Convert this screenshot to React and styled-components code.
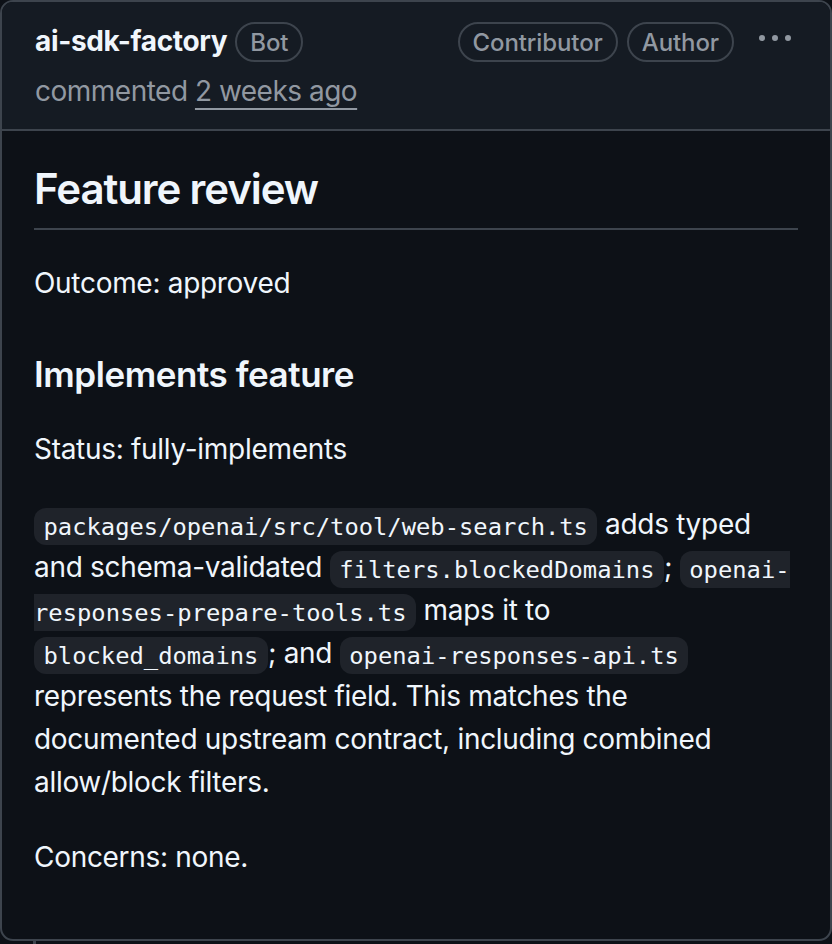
import React from "react";
import styled, { createGlobalStyle } from "styled-components";

const GlobalStyle = createGlobalStyle`
  html, body {
    margin: 0;
    padding: 0;
    background: #0d1117;
  }
  body {
    font-family: Inter, "Noto Sans", "Liberation Sans", sans-serif;
    color: #f0f6fc;
    -webkit-font-smoothing: antialiased;
  }
`;

const Page = styled.div`
  width: 832px;
`;

const Card = styled.div`
  box-sizing: border-box;
  width: 832px;
  height: 941px;
  border: 2px solid #3d444d;
  border-radius: 13px;
  overflow: hidden;
  background: #0d1117;
  display: flex;
  flex-direction: column;
`;

const Header = styled.header`
  background: #151b23;
  border-bottom: 2px solid #3d444d;
  padding: 20px 32px 17px 33px;
  display: flex;
  flex-direction: column;
  gap: 8px;
`;

const TopRow = styled.div`
  display: flex;
  align-items: center;
  height: 40px;
`;

const Author = styled.a`
  font-size: 28px;
  font-weight: 700;
  line-height: 40px;
  letter-spacing: -0.35px;
  color: #f0f6fc;
  text-decoration: none;
  margin-right: 8px;
  position: relative;
  top: -1px;
`;

const Label = styled.span`
  box-sizing: border-box;
  display: inline-flex;
  align-items: center;
  height: 40px;
  padding: 0 13px;
  border: 2px solid #3d444d;
  border-radius: 999px;
  font-size: 24px;
  font-weight: 500;
  letter-spacing: -0.1px;
  color: #9198a1;
  margin-left: ${(p) => (p.$gap ? p.$gap : 0)}px;
`;

const Spacer = styled.div`
  flex: 1;
`;

const KebabButton = styled.button`
  display: flex;
  align-items: center;
  justify-content: center;
  background: none;
  border: 0;
  padding: 0 7px;
  margin-left: 18px;
  margin-top: -6px;
  color: #9198a1;
  cursor: pointer;
`;

const Meta = styled.div`
  font-size: 28px;
  line-height: 42px;
  letter-spacing: -0.5px;
  color: #9198a1;
`;

const TimeLink = styled.a`
  color: #9198a1;
  text-decoration: underline;
  text-decoration-thickness: 2px;
  text-underline-offset: 7px;
`;

const Body = styled.div`
  padding: 32px 32px 0 32px;
  font-size: 28px;
  line-height: 43px;
  letter-spacing: -0.3px;
`;

const H2 = styled.h2`
  margin: 0 0 32px;
  padding-bottom: 12px;
  border-bottom: 2px solid #3d444d;
  font-size: 42px;
  font-weight: 600;
  line-height: 1.25;
  letter-spacing: -1.1px;
`;

const H3 = styled.h3`
  margin: 48px 0 32px;
  font-size: 35px;
  font-weight: 600;
  line-height: 1.25;
  letter-spacing: -0.45px;
`;

const P = styled.p`
  margin: 0 0 32px;
  max-width: 758px;
  &:last-child {
    margin-bottom: 0;
  }
`;

const Code = styled.code`
  font-family: "DejaVu Sans Mono", "Liberation Mono", monospace;
  font-size: 85%;
  line-height: 1;
  letter-spacing: 0;
  padding: 0.2em 0.4em;
  border-radius: 12px;
  background: #1f232a;
  white-space: break-spaces;
`;

const TimelineStub = styled.div`
  width: 3px;
  height: 3px;
  margin-left: 33px;
  background: #3d444d;
`;

function KebabIcon() {
  return (
    <svg width="32" height="32" viewBox="0 0 16 16" fill="currentColor">
      <path d="M8 9a1.5 1.5 0 1 0 0-3 1.5 1.5 0 0 0 0 3ZM1.5 9a1.5 1.5 0 1 0 0-3 1.5 1.5 0 0 0 0 3Zm13 0a1.5 1.5 0 1 0 0-3 1.5 1.5 0 0 0 0 3Z" />
    </svg>
  );
}

export default function App() {
  return (
    <Page>
      <GlobalStyle />
      <Card>
        <Header>
          <TopRow>
            <Author href="#">ai-sdk-factory</Author>
            <Label>Bot</Label>
            <Spacer />
            <Label>Contributor</Label>
            <Label $gap={9}>Author</Label>
            <KebabButton type="button" aria-label="Comment actions">
              <KebabIcon />
            </KebabButton>
          </TopRow>
          <Meta>
            commented <TimeLink href="#">2 weeks ago</TimeLink>
          </Meta>
        </Header>
        <Body>
          <H2>Feature review</H2>
          <P>Outcome: approved</P>
          <H3>Implements feature</H3>
          <P>Status: fully-implements</P>
          <P>
            <Code>packages/openai/src/tool/web-search.ts</Code> adds typed and schema-validated{" "}
            <Code>filters.blockedDomains</Code>; <Code>openai-responses-prepare-tools.ts</Code> maps it to{" "}
            <Code>blocked_domains</Code>; and <Code>openai-responses-api.ts</Code> represents the request field. This
            matches the documented upstream contract, including combined allow/block filters.
          </P>
          <P>Concerns: none.</P>
        </Body>
      </Card>
      <TimelineStub />
    </Page>
  );
}
